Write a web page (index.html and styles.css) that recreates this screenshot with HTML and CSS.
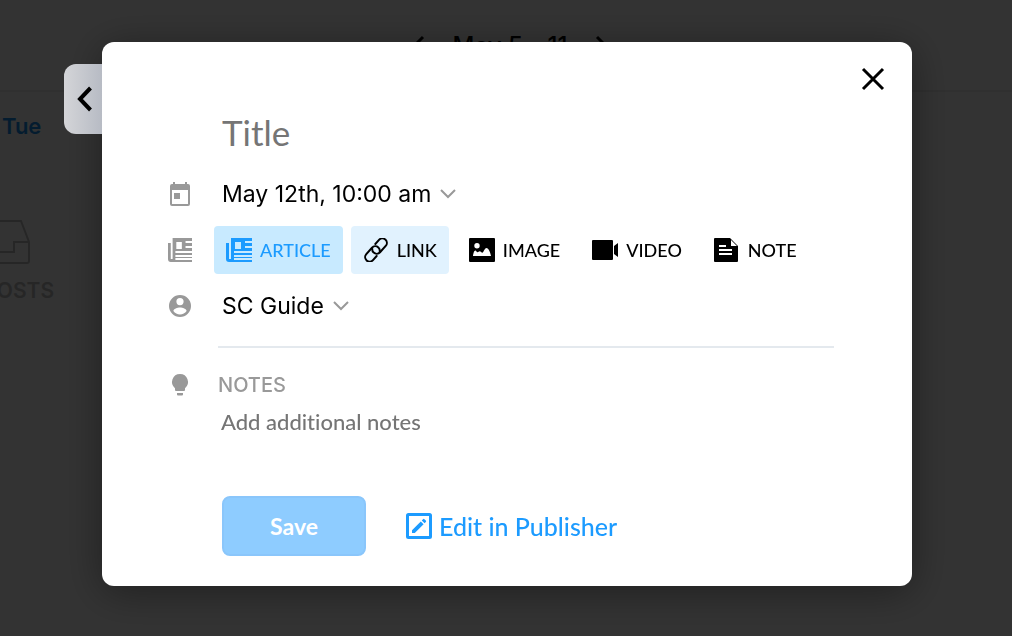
FILE: index.html
```html
<!DOCTYPE html>
<html lang="en">
<head>
    <meta charset="UTF-8">
    <meta name="viewport" content="width=device-width, initial-scale=1.0">
    <title>Content Calendar</title>
    <link rel="stylesheet" href="styles.css">
</head>
<body>
    <!-- calendar behind the dialog -->
    <div class="calendar">
        <header class="calendar-nav">
            <svg class="nav-arrow" viewBox="0 0 12 20"><path d="M10 2L2 10l8 8"/></svg>
            <span>May 5 – 11</span>
            <svg class="nav-arrow" viewBox="0 0 12 20"><path d="M2 2l8 8-8 8"/></svg>
        </header>
        <div class="day">
            <h2 class="day-name">Tue</h2>
            <div class="day-empty">
                <svg class="inbox-icon" viewBox="0 0 60 46"><path d="M9 2h42l8 21v19a2 2 0 0 1-2 2H3a2 2 0 0 1-2-2V23zM1 23h14v10h29V23h15"/></svg>
                <span>NO POSTS</span>
            </div>
        </div>
    </div>

    <div class="overlay">
        <div class="modal" role="dialog" aria-label="New post">
            <button class="back-tab" type="button" aria-label="Back">
                <svg viewBox="0 0 16 26"><path d="M13.500 2L3 13l10.500 11"/></svg>
            </button>
            <button class="close" type="button" aria-label="Close">
                <svg viewBox="0 0 24 24"><path d="M2 2l20 20M22 2L2 22"/></svg>
            </button>

            <form class="post-form">
                <input class="title-input" type="text" placeholder="Title" aria-label="Title">

                <div class="row">
                    <svg class="row-icon" viewBox="0 0 24 24"><path fill-rule="evenodd" d="M5 0h2v2h10V0h2v2h1a2 2 0 0 1 2 2v18a2 2 0 0 1-2 2H4a2 2 0 0 1-2-2V4a2 2 0 0 1 2-2h1zM4 8v14h16V8zM6 11h6v6H6z"/></svg>
                    <button class="dropdown" type="button">May 12th, 10:00 am
                        <svg class="chevron" viewBox="0 0 16 10"><path d="M1 1l7 7 7-7"/></svg>
                    </button>
                </div>

                <div class="row">
                    <svg class="row-icon" viewBox="0 0 26 24" preserveAspectRatio="none"><path fill-rule="evenodd" d="M5 0h21v3h-7v2h7v3h-7v2h7v3H8v2h18v2H8v2h18v1H8v2h18v2H3a3 3 0 0 1-3-3V5h3v16h2zM9 4v7h6V4z"/></svg>
                    <div class="types">
                        <button class="type type-active" type="button">
                            <svg viewBox="0 0 26 24"><path fill-rule="evenodd" d="M5 0h21v3h-7v2h7v3h-7v2h7v3H8v2h18v2H8v2h18v1H8v2h18v2H3a3 3 0 0 1-3-3V5h3v16h2zM9 4v7h6V4z"/></svg>
                            ARTICLE
                        </button>
                        <button class="type type-hover" type="button">
                            <svg class="type-link" viewBox="0 0 26 24"><g transform="rotate(-48 13 12)"><path d="M17 7.500h5.500a4.500 4.500 0 0 1 0 9H14a4.500 4.500 0 0 1-4.500-4.500c0-1.500.7-2.700 1.800-3.500"/><path d="M9 16.500H3.500a4.500 4.500 0 0 1 0-9H12a4.500 4.500 0 0 1 4.500 4.500c0 1.500-.7 2.700-1.800 3.500"/></g></svg>
                            LINK
                        </button>
                        <button class="type" type="button">
                            <svg viewBox="0 0 26 24"><path fill-rule="evenodd" d="M1 0h24a1 1 0 0 1 1 1v22a1 1 0 0 1-1 1H1a1 1 0 0 1-1-1V1a1 1 0 0 1 1-1zM8 5a2.700 2.700 0 1 0 0 5.400A2.700 2.700 0 0 0 8 5zM4 18h18c-.8-4-2.500-8-4.500-8-1.600 0-2.800 3.800-4 4.800-1.100-.2-1.800-1.500-2.700-1.500-1 0-1.400 1-2.300 1-.8 0-1.200-1.800-2.100-1.800-1.400 0-2 3-2.400 5.500z"/></svg>
                            IMAGE
                        </button>
                        <button class="type" type="button">
                            <svg viewBox="0 0 26 24"><path d="M1 2h19a1 1 0 0 1 1 1v18a1 1 0 0 1-1 1H1a1 1 0 0 1-1-1V3a1 1 0 0 1 1-1zM22 8l4-3v14l-4-3z"/></svg>
                            VIDEO
                        </button>
                        <button class="type" type="button">
                            <svg viewBox="0 0 26 24"><path fill-rule="evenodd" d="M1 0h15l8 8v15a1 1 0 0 1-1 1H1a1 1 0 0 1-1-1V1a1 1 0 0 1 1-1zM17 2v6h6z"/><path class="note-lines" d="M5 8h7M5 12h13M5 16h13"/></svg>
                            NOTE
                        </button>
                    </div>
                </div>

                <div class="row">
                    <svg class="row-icon" viewBox="0 0 24 24"><path fill-rule="evenodd" d="M12 1a11 11 0 1 0 0 22 11 11 0 0 0 0-22zm0 3a3.600 3.600 0 1 1 0 7.200A3.600 3.600 0 0 1 12 4zm0 9.500c2.500 0 6.600 1.300 6.600 3.500a8 8 0 0 1-13.200 0c0-2.200 4.100-3.500 6.600-3.500z"/></svg>
                    <button class="dropdown" type="button">SC Guide
                        <svg class="chevron" viewBox="0 0 16 10"><path d="M1 1l7 7 7-7"/></svg>
                    </button>
                </div>

                <div class="notes">
                    <svg class="row-icon" viewBox="0 0 24 24"><path d="M12 1a8 8 0 0 1 5 14.200V17a1 1 0 0 1-1 1H8a1 1 0 0 1-1-1v-1.800A8 8 0 0 1 12 1zM9 20h6v1.500a1 1 0 0 1-1 1h-4a1 1 0 0 1-1-1z"/></svg>
                    <div class="notes-field">
                        <label for="notes">NOTES</label>
                        <textarea id="notes" rows="1" placeholder="Add additional notes"></textarea>
                    </div>
                </div>

                <div class="actions">
                    <button class="save" type="button">Save</button>
                    <a class="publisher" href="#">
                        <svg viewBox="0 0 26 26"><rect x="1.500" y="1.500" width="23" height="23" rx="1"/><path d="M6 17.200l8.800-8.800 2.800 2.800L8.800 20H6zM15.800 7.400l1.200-1.200a1 1 0 0 1 1.400 0l1.400 1.400a1 1 0 0 1 0 1.400l-1.200 1.200z"/></svg>
                        Edit in Publisher
                    </a>
                </div>
            </form>
        </div>
    </div>
</body>
</html>
```
FILE: styles.css
```css
* {
    box-sizing: border-box;
}
body {
    margin: 0;
    min-height: 100vh;
    overflow: hidden;
    font-family: Lato, sans-serif;
    background-color: #fff;
}
button {
    font-family: inherit;
    border: none;
    background: none;
    padding: 0;
    cursor: pointer;
}
svg {
    flex-shrink: 0;
}

/* calendar */
.calendar {
    font-family: Inter, sans-serif;
}
.calendar-nav {
    display: flex;
    justify-content: center;
    align-items: center;
    gap: 28px;
    height: 92px;
    padding-left: 8px;
    border-bottom: 2px solid #eee;
    font-size: 24px;
    font-weight: 500;
}
.nav-arrow {
    width: 12px;
    height: 20px;
    fill: none;
    stroke: #000;
    stroke-width: 3;
}
.day-name {
    margin: 20px 0 0 2px;
    font-size: 22px;
    line-height: 28px;
    font-weight: 600;
    color: #168eea;
}
.day-empty {
    display: flex;
    flex-direction: column;
    align-items: center;
    gap: 14px;
    width: 120px;
    margin: 79px 0 0 -60px;
    color: #bebebe;
    font-size: 21px;
    line-height: 24px;
    font-weight: 600;
    white-space: nowrap;
}
.inbox-icon {
    width: 60px;
    height: 46px;
    fill: none;
    stroke: #bebebe;
    stroke-width: 2;
}

/* dialog */
.overlay {
    position: fixed;
    inset: 0;
    padding: 42px 100px 42px 102px;
    background-color: rgba(0, 0, 0, 0.8);
}
.modal {
    position: relative;
    max-width: 810px;
    margin: 0 auto;
    padding: 66px 78px 30px 66px;
    background-color: #fff;
    border-radius: 12px;
    box-shadow: 0 6px 40px rgba(0, 0, 0, 0.4);
}
.back-tab {
    position: absolute;
    top: 22px;
    right: 100%;
    display: flex;
    align-items: center;
    justify-content: center;
    width: 38px;
    height: 70px;
    border-radius: 12px 0 0 12px;
    background: linear-gradient(90deg, #d4d5d8, #b7bbc4);
}
.back-tab svg {
    width: 16px;
    height: 26px;
    margin-left: 4px;
    fill: none;
    stroke: #000;
    stroke-width: 4;
}
.close {
    position: absolute;
    top: 25px;
    right: 27px;
    display: flex;
}
.close svg {
    width: 24px;
    height: 24px;
    fill: none;
    stroke: #000;
    stroke-width: 3;
}
.title-input {
    display: block;
    width: calc(100% - 54px);
    height: 48px;
    margin: 0 0 10px 54px;
    padding: 0;
    border: none;
    outline: none;
    font-family: inherit;
    font-size: 35px;
}
.title-input::placeholder,
.notes textarea::placeholder {
    color: #757575;
}
.row {
    display: flex;
    align-items: center;
    height: 56px;
}
.row-icon {
    width: 24px;
    height: 24px;
    fill: #999;
}
.dropdown {
    display: flex;
    align-items: center;
    gap: 9px;
    margin-left: 30px;
    font-family: Inter, sans-serif;
    font-size: 23px;
    color: #000;
}
.chevron {
    width: 16px;
    height: 10px;
    fill: none;
    stroke: #999;
    stroke-width: 2;
}
.types {
    display: flex;
    gap: 8px;
    margin-left: 22px;
}
.type {
    display: flex;
    align-items: center;
    gap: 8px;
    height: 48px;
    padding: 0 12px;
    border-radius: 4px;
    font-size: 18px;
    font-weight: 500;
    color: #000;
}
.type svg {
    width: 26px;
    height: 24px;
    fill: currentColor;
}
.type .type-link {
    fill: none;
    stroke: currentColor;
    stroke-width: 2;
    stroke-linecap: round;
}
.note-lines {
    stroke: #fff;
    stroke-width: 2;
}
.type-active {
    background-color: #c8eaff;
    color: #1c9bff;
}
.type-hover {
    background-color: #e1f2fe;
}
.notes {
    display: flex;
    align-items: flex-start;
    margin-top: 12px;
}
.notes > .row-icon {
    margin-top: 27px;
}
.notes-field {
    flex: 1;
    margin-left: 26px;
    padding-top: 22px;
    border-top: 2px solid #e4e9ee;
}
.notes label {
    display: block;
    font-family: Inter, sans-serif;
    font-size: 20px;
    line-height: 30px;
    font-weight: 500;
    color: #999;
}
.notes textarea {
    display: block;
    width: 100%;
    height: 32px;
    margin-top: 6px;
    padding: 0 3px;
    border: none;
    outline: none;
    resize: none;
    font-family: inherit;
    font-size: 22px;
    font-weight: 500;
    font-variant-ligatures: none;
    line-height: 32px;
}
.actions {
    display: flex;
    align-items: center;
    gap: 40px;
    margin: 58px 0 0 54px;
}
.save {
    width: 144px;
    height: 60px;
    border: 2px solid #8ac6fb;
    border-radius: 8px;
    background-color: #8eccff;
    color: #fff;
    font-size: 23px;
    font-weight: 700;
}
.publisher {
    display: flex;
    align-items: center;
    gap: 7px;
    color: #1c9bff;
    font-size: 25px;
    font-weight: 500;
    text-decoration: none;
}
.publisher svg {
    width: 26px;
    height: 26px;
    fill: #1c9bff;
}
.publisher rect {
    fill: none;
    stroke: #1c9bff;
    stroke-width: 3;
}
```
